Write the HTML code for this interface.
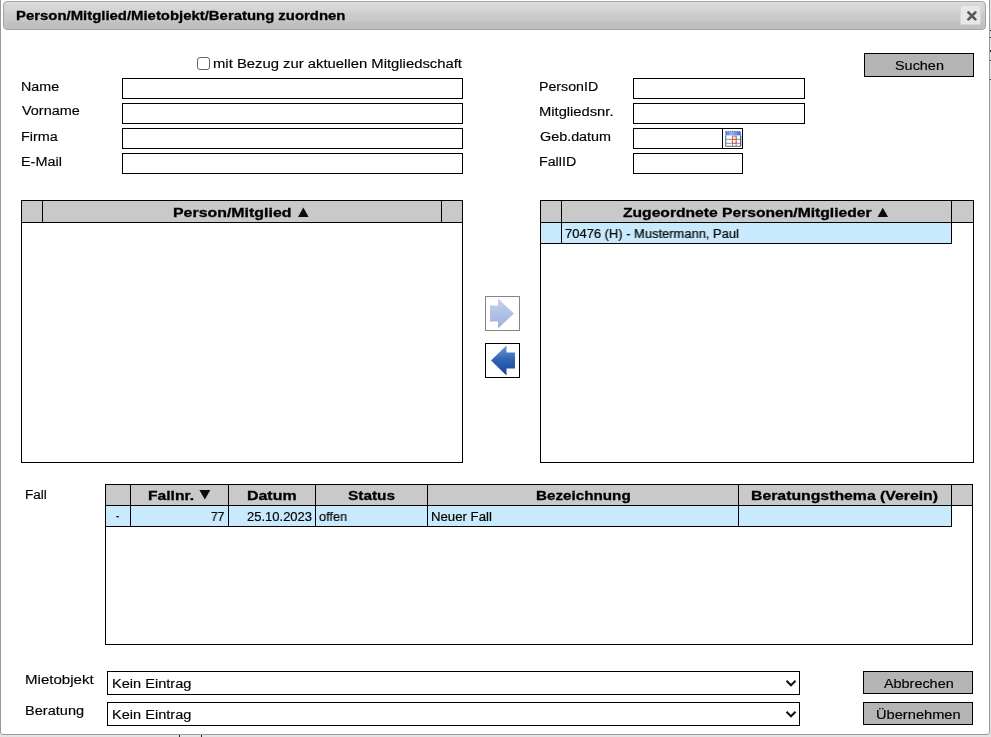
<!DOCTYPE html>
<html><head><meta charset="utf-8">
<style>
html,body{margin:0;padding:0;width:991px;height:737px;overflow:hidden;background:#e4e4e4;}
body{position:relative;font-family:"Liberation Sans",sans-serif;color:#111;}
.a{position:absolute;box-sizing:border-box;}
.t{position:absolute;white-space:nowrap;line-height:1;transform-origin:0 0;color:#000;-webkit-text-stroke:0.15px #000;will-change:transform;}
.b{font-weight:bold;color:#000;-webkit-text-stroke:0.3px #000;}
.h{-webkit-text-stroke:0.2px #000;color:#000;}
.box{position:absolute;box-sizing:border-box;border:1px solid #000;background:#fff;}
.hdr{background:#c9c9c9;}
.row{background:#c9e9fc;}
.btn{position:absolute;box-sizing:border-box;border:1px solid #000;background:#b4b4b4;}
.vl{position:absolute;width:1px;background:#000;}
.hl{position:absolute;height:1px;background:#000;}
</style></head><body>
<!-- dialog -->
<div class="a" style="left:0;top:-10px;width:990px;height:745px;border:1px solid #9a9a9a;border-radius:0 0 3px 3px;background:#fff;"></div>
<div class="vl" style="left:179px;top:735px;height:2px;background:#222;"></div>
<div class="vl" style="left:201px;top:735px;height:2px;background:#222;"></div>
<div class="a" style="left:990px;top:30px;width:1px;height:1px;background:#222;"></div><div class="a" style="left:990px;top:37px;width:1px;height:1px;background:#222;"></div><div class="a" style="left:990px;top:50px;width:1px;height:2px;background:#222;"></div><div class="a" style="left:990px;top:60px;width:1px;height:1px;background:#222;"></div><div class="a" style="left:990px;top:79px;width:1px;height:1px;background:#222;"></div>
<!-- title bar -->
<div class="a" style="left:3px;top:1px;width:983px;height:29px;border:1px solid #a3a3a3;border-radius:4px;background:linear-gradient(#e4e4e4 0px,#d8d8d8 1.5px,#d5d5d5 7px,#d0d0d0 11px,#cbcbcb 12px,#c8c8c8 19px,#c1c1c1 20px,#bfbfbf 27px);"></div>
<div class="a" style="left:960px;top:5px;width:21px;height:20px;border:1px solid #d6d6d6;border-radius:2px;background:#e7e7e7;"></div>
<svg class="a" style="left:966px;top:10px" width="12" height="12" viewBox="0 0 12 12"><path d="M2.4 2.4L9.4 9.4M9.4 2.4L2.4 9.4" stroke="#585858" stroke-width="2.7" stroke-linecap="round"/></svg>

<!-- checkbox -->
<div class="a" style="left:197px;top:57px;width:13px;height:13px;border:1px solid #666;border-radius:3px;background:#fff;"></div>

<!-- left inputs -->
<div class="box" style="left:122px;top:78px;width:341px;height:21px;"></div>
<div class="box" style="left:122px;top:103px;width:341px;height:21px;"></div>
<div class="box" style="left:122px;top:128px;width:341px;height:21px;"></div>
<div class="box" style="left:122px;top:153px;width:341px;height:21px;"></div>

<!-- right inputs -->
<div class="box" style="left:633px;top:78px;width:172px;height:21px;"></div>
<div class="box" style="left:633px;top:103px;width:172px;height:21px;"></div>
<div class="box" style="left:633px;top:128px;width:110px;height:21px;"></div>
<div class="vl" style="left:722px;top:128px;height:21px;"></div>
<svg class="a" style="left:725px;top:130px" width="17" height="18" viewBox="0 0 17 18">
<defs><linearGradient id="cg" x1="0" y1="0" x2="1" y2="0"><stop offset="0" stop-color="#4f78ea"/><stop offset="0.4" stop-color="#8fb2fa"/><stop offset="1" stop-color="#3e6ae4"/></linearGradient></defs>
<path d="M0.5 1.4H15.8" stroke="#3a3f55" stroke-width="0.9" stroke-dasharray="1.4 0.8"/>
<rect x="0.3" y="1.8" width="15.6" height="3.8" fill="url(#cg)"/>
<rect x="0.7" y="5.6" width="15" height="10.6" fill="#fbfbf6"/>
<path d="M0.7 5.6V16.3H15.7V5.6" fill="none" stroke="#4c5270" stroke-width="0.9"/>
<path d="M0.7 9.4H15.7M0.7 13.3H15.7M7.5 5.6V16.3M11.2 5.6V16.3" stroke="#7a7a7e" stroke-width="0.8"/>
<path d="M7.5 6V13.6M11.2 6V13.6M7.5 9.4H11.2M7.5 13.3H11.2M7.5 6.2H11.2" stroke="#df5a44" stroke-width="0.8"/>
<path d="M15.7 5.6V16.3" stroke="#3d5aa8" stroke-width="0.9"/>
</svg>
<div class="box" style="left:633px;top:153px;width:110px;height:21px;"></div>

<!-- Suchen -->
<div class="btn" style="left:864px;top:53px;width:110px;height:24px;"></div>

<!-- left table -->
<div class="box" style="left:21px;top:200px;width:442px;height:263px;"></div>
<div class="a hdr" style="left:22px;top:201px;width:440px;height:21px;"></div>
<div class="hl" style="left:21px;top:222px;width:442px;"></div>
<div class="vl" style="left:42px;top:200px;height:23px;"></div>
<div class="vl" style="left:441px;top:200px;height:23px;"></div>
<svg class="a" style="left:298px;top:207px" width="11" height="10" viewBox="0 0 11 10"><path d="M5.3 0.5L10.6 10H0Z" fill="#0c0c0c"/></svg>

<!-- right table -->
<div class="box" style="left:540px;top:200px;width:434px;height:263px;"></div>
<div class="a hdr" style="left:541px;top:201px;width:432px;height:21px;"></div>
<div class="hl" style="left:540px;top:222px;width:434px;"></div>
<div class="vl" style="left:561px;top:200px;height:23px;"></div>
<div class="vl" style="left:951px;top:200px;height:23px;"></div>
<svg class="a" style="left:877px;top:207px" width="12" height="10" viewBox="0 0 12 10"><path d="M5.8 0.8L11.1 10H0.5Z" fill="#0c0c0c"/></svg>
<div class="a row" style="left:541px;top:223px;width:410px;height:20px;"></div>
<div class="hl" style="left:540px;top:243px;width:412px;"></div>
<div class="vl" style="left:561px;top:222px;height:22px;"></div>
<div class="vl" style="left:951px;top:222px;height:22px;"></div>

<!-- arrows -->
<div class="a" style="left:485px;top:296px;width:35px;height:35px;border:1px solid #858585;background:#fff;"></div>
<svg class="a" style="left:485px;top:296px" width="35" height="35" viewBox="0 0 35 35">
<defs><linearGradient id="g1" x1="0" y1="0" x2="0" y2="1"><stop offset="0" stop-color="#c3d2ec"/><stop offset="1" stop-color="#9db1dc"/></linearGradient></defs>
<path d="M5 9.5H13V2.5L29 17.5L13 32.5V25.5H5Z" fill="url(#g1)"/></svg>
<div class="a" style="left:485px;top:343px;width:35px;height:35px;border:1px solid #000;background:#fff;"></div>
<svg class="a" style="left:485px;top:343px" width="35" height="35" viewBox="0 0 35 35">
<defs><linearGradient id="g2" x1="0" y1="0" x2="0" y2="1"><stop offset="0" stop-color="#6f98d3"/><stop offset="0.45" stop-color="#3366b6"/><stop offset="1" stop-color="#16439a"/></linearGradient></defs>
<path d="M6 17.5L21.5 2.5V9.5H30V25.5H21.5V32.5Z" fill="url(#g2)"/></svg>

<!-- fall table -->
<div class="box" style="left:105px;top:484px;width:868px;height:161px;"></div>
<div class="a hdr" style="left:106px;top:485px;width:866px;height:20px;"></div>
<div class="hl" style="left:105px;top:505px;width:868px;"></div>
<div class="a row" style="left:106px;top:506px;width:845px;height:20px;"></div>
<div class="hl" style="left:105px;top:526px;width:847px;"></div>
<div class="vl" style="left:130px;top:484px;height:43px;"></div>
<div class="vl" style="left:228px;top:484px;height:43px;"></div>
<div class="vl" style="left:315px;top:484px;height:43px;"></div>
<div class="vl" style="left:427px;top:484px;height:43px;"></div>
<div class="vl" style="left:738px;top:484px;height:43px;"></div>
<div class="vl" style="left:951px;top:484px;height:43px;"></div>
<svg class="a" style="left:199px;top:490px" width="12" height="10" viewBox="0 0 12 10"><path d="M0.4 0H11.3L5.85 9.6Z" fill="#0c0c0c"/></svg>

<!-- bottom -->
<div class="box" style="left:107px;top:671px;width:693px;height:24px;"></div>
<div class="box" style="left:107px;top:702px;width:693px;height:24px;"></div>
<svg class="a" style="left:785px;top:679px" width="12" height="9" viewBox="0 0 12 9"><path d="M1.5 1.8L6 6.3L10.5 1.8" fill="none" stroke="#111" stroke-width="2"/></svg>
<svg class="a" style="left:785px;top:710px" width="12" height="9" viewBox="0 0 12 9"><path d="M1.5 1.8L6 6.3L10.5 1.8" fill="none" stroke="#111" stroke-width="2"/></svg>
<div class="btn" style="left:863px;top:671px;width:110px;height:23px;"></div>
<div class="btn" style="left:863px;top:702px;width:110px;height:23px;"></div>
<div class="t b" style="left:16.49px;top:9.03px;font-size:13px;transform:scaleX(1.1459)">Person/Mitglied/Mietobjekt/Beratung zuordnen</div>
<div class="t" style="left:213.49px;top:58.12px;font-size:12.5px;transform:scaleX(1.1867)">mit Bezug zur aktuellen Mitgliedschaft</div>
<div class="t" style="left:21.08px;top:80.50px;font-size:12.5px;transform:scaleX(1.1422)">Name</div>
<div class="t" style="left:21.50px;top:105.32px;font-size:12.5px;transform:scaleX(1.1536)">Vorname</div>
<div class="t" style="left:21.06px;top:131.07px;font-size:12.5px;transform:scaleX(1.1514)">Firma</div>
<div class="t" style="left:21.04px;top:156.03px;font-size:12.5px;transform:scaleX(1.1540)">E-Mail</div>
<div class="t" style="left:538.79px;top:81.00px;font-size:12.5px;transform:scaleX(1.1351)">PersonID</div>
<div class="t" style="left:538.88px;top:106.08px;font-size:12.5px;transform:scaleX(1.1781)">Mitgliedsnr.</div>
<div class="t" style="left:540.19px;top:130.84px;font-size:12.5px;transform:scaleX(1.1488)">Geb.datum</div>
<div class="t" style="left:538.78px;top:155.86px;font-size:12.5px;transform:scaleX(1.1389)">FallID</div>
<div class="t" style="left:894.96px;top:60.08px;font-size:12.5px;transform:scaleX(1.1534)">Suchen</div>
<div class="t b" style="left:173.01px;top:205.95px;font-size:13px;transform:scaleX(1.2240)">Person/Mitglied</div>
<div class="t b" style="left:622.52px;top:205.95px;font-size:13px;transform:scaleX(1.2030)">Zugeordnete Personen/Mitglieder</div>
<div class="t h" style="left:565.48px;top:226.72px;font-size:13px;transform:scaleX(0.9950)">70476 (H) - Mustermann, Paul</div>
<div class="t" style="left:24.68px;top:489.12px;font-size:12.5px;transform:scaleX(1.0848)">Fall</div>
<div class="t b" style="left:147.55px;top:488.71px;font-size:13px;transform:scaleX(1.2013)">Fallnr.</div>
<div class="t b" style="left:247.45px;top:488.95px;font-size:13px;transform:scaleX(1.2260)">Datum</div>
<div class="t b" style="left:348.44px;top:488.95px;font-size:13px;transform:scaleX(1.1846)">Status</div>
<div class="t b" style="left:536.46px;top:488.95px;font-size:13px;transform:scaleX(1.1703)">Bezeichnung</div>
<div class="t b" style="left:751.49px;top:488.95px;font-size:13px;transform:scaleX(1.2154)">Beratungsthema (Verein)</div>
<div class="t h" style="left:116.21px;top:509.35px;font-size:13px;transform:scaleX(0.7517)">-</div>
<div class="t h" style="left:211.26px;top:510.03px;font-size:13px;transform:scaleX(0.9161)">77</div>
<div class="t h" style="left:247.45px;top:509.91px;font-size:13px;transform:scaleX(0.9998)">25.10.2023</div>
<div class="t h" style="left:319.36px;top:509.95px;font-size:13px;transform:scaleX(0.9802)">offen</div>
<div class="t h" style="left:431.17px;top:509.95px;font-size:13px;transform:scaleX(1.0143)">Neuer Fall</div>
<div class="t" style="left:24.88px;top:674.00px;font-size:12.5px;transform:scaleX(1.2048)">Mietobjekt</div>
<div class="t" style="left:25.19px;top:705.00px;font-size:12.5px;transform:scaleX(1.1642)">Beratung</div>
<div class="t" style="left:111.59px;top:678.11px;font-size:12.5px;transform:scaleX(1.1652)">Kein Eintrag</div>
<div class="t" style="left:111.59px;top:709.11px;font-size:12.5px;transform:scaleX(1.1652)">Kein Eintrag</div>
<div class="t" style="left:883.70px;top:678.08px;font-size:12.5px;transform:scaleX(1.1518)">Abbrechen</div>
<div class="t" style="left:875.68px;top:709.08px;font-size:12.5px;transform:scaleX(1.1714)">Übernehmen</div>
</body></html>
